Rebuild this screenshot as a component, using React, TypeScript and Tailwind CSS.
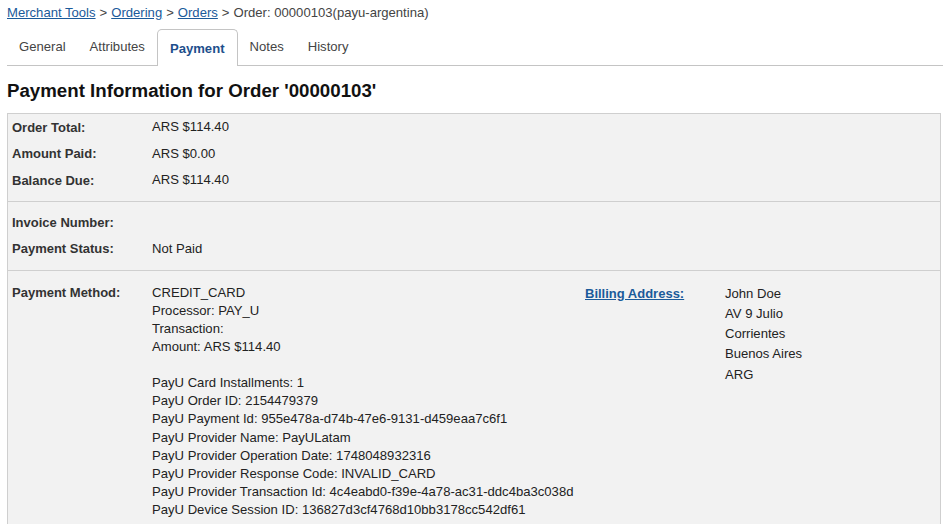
import React from "react";

const crumbs = [
  { label: "Merchant Tools", href: "#" },
  { label: "Ordering", href: "#" },
  { label: "Orders", href: "#" },
];

const tabs = ["General", "Attributes", "Payment", "Notes", "History"];

const totals = [
  { label: "Order Total:", value: "ARS $114.40" },
  { label: "Amount Paid:", value: "ARS $0.00" },
  { label: "Balance Due:", value: "ARS $114.40" },
];

const methodLines = [
  "CREDIT_CARD",
  "Processor: PAY_U",
  "Transaction:",
  "Amount: ARS $114.40",
];

const payuLines = [
  "PayU Card Installments: 1",
  "PayU Order ID: 2154479379",
  "PayU Payment Id: 955e478a-d74b-47e6-9131-d459eaa7c6f1",
  "PayU Provider Name: PayULatam",
  "PayU Provider Operation Date: 1748048932316",
  "PayU Provider Response Code: INVALID_CARD",
  "PayU Provider Transaction Id: 4c4eabd0-f39e-4a78-ac31-ddc4ba3c038d",
  "PayU Device Session ID: 136827d3cf4768d10bb3178cc542df61",
];

const address = ["John Doe", "AV 9 Julio", "Corrientes", "Buenos Aires", "ARG"];

export default function App() {
  return (
    <div className="h-[524px] w-[950px] overflow-hidden bg-white font-['Liberation_Sans',Arial,sans-serif] text-[13.1px] text-[#222]">
      {/* breadcrumb */}
      <div className="flex h-[25px] items-center pl-[7px] text-[#444]">
        {crumbs.map((c) => (
          <span key={c.label}>
            <a href={c.href} className="text-[#1a5a9a] underline">
              {c.label}
            </a>
            <span className="mx-[4px]">&gt;</span>
          </span>
        ))}
        <span>Order: 00000103(payu-argentina)</span>
      </div>

      {/* tabs */}
      <div className="mx-[7px] mt-[4px] flex h-[37px] items-end border-b border-[#c4c4c4]">
        {tabs.map((t) => {
          const active = t === "Payment";
          return (
            <div
              key={t}
              className={
                active
                  ? "-mb-px flex h-[37px] items-center rounded-t-[5px] border border-b-0 border-[#c4c4c4] bg-white px-[12px] pt-[2px] font-bold text-[#1d4f8c]"
                  : "flex h-[36px] items-center px-[12px] text-[#444]"
              }
            >
              {t}
            </div>
          );
        })}
      </div>

      <h1 className="ml-[7px] mt-[14px] text-[18.7px] font-bold leading-[22px] text-[#111]">
        Payment Information for Order '00000103'
      </h1>

      {/* info box */}
      <div className="ml-[7px] mt-[11px] w-[934px] border border-[#cfcfcf] bg-[#f2f2f2]">
        <div className="pb-[7px] pl-[4px]">
          {totals.map((r) => (
            <div key={r.label} className="flex h-[26.5px] items-center">
              <div className="w-[140px] text-[13px] font-bold text-[#333]">{r.label}</div>
              <div>{r.value}</div>
            </div>
          ))}
        </div>

        <div className="border-t border-[#cfcfcf] py-[8px] pl-[4px]">
          <div className="flex h-[26px] items-center">
            <div className="w-[140px] text-[13px] font-bold text-[#333]">Invoice Number:</div>
            <div></div>
          </div>
          <div className="flex h-[26px] items-center">
            <div className="w-[140px] text-[13px] font-bold text-[#333]">Payment Status:</div>
            <div>Not Paid</div>
          </div>
        </div>

        <div className="flex border-t border-[#cfcfcf] pb-[16px] pl-[4px] pt-[13px] leading-[18.15px]">
          <div className="w-[140px] text-[13px] font-bold text-[#333]">Payment Method:</div>
          <div className="w-[433px]">
            {methodLines.map((l) => (
              <div key={l}>{l}</div>
            ))}
            <div className="h-[18px]" />
            {payuLines.map((l) => (
              <div key={l}>{l}</div>
            ))}
          </div>
          <div className="w-[140px] pt-[1px]">
            <a href="#" className="text-[13px] font-bold text-[#1a5a9a] underline">
              Billing Address:
            </a>
          </div>
          <div className="leading-[20.3px]">
            {address.map((l) => (
              <div key={l}>{l}</div>
            ))}
          </div>
        </div>
      </div>
    </div>
  );
}
